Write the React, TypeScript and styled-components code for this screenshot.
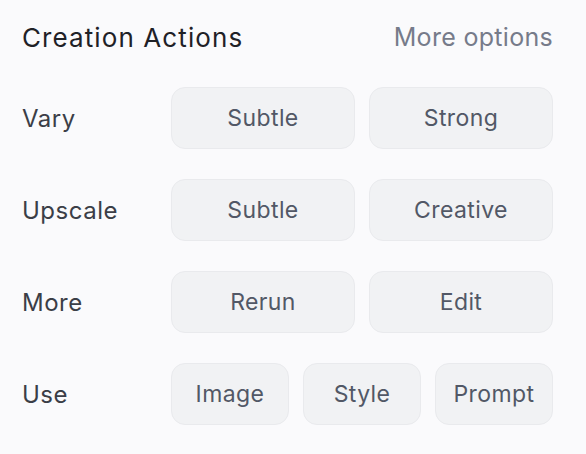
import React from "react";
import styled, { createGlobalStyle } from "styled-components";

const Global = createGlobalStyle`
  html, body { margin: 0; padding: 0; background: #fafafc; }
  body { font-family: Inter, "Noto Sans", sans-serif; }
`;

const Panel = styled.div`
  width: 586px;
  height: 454px;
  box-sizing: border-box;
  padding: 20px 33px 0 22px;
  background: #fafafc;
  display: flex;
  flex-direction: column;
`;

const Header = styled.div`
  display: flex;
  justify-content: space-between;
  align-items: center;
  height: 34px;
  margin-bottom: 33px;
`;

const Title = styled.div`
  font-size: 26px;
  font-weight: 400;
  color: #1f2127;
  letter-spacing: 1.1px;
`;

const MoreLink = styled.div`
  font-size: 25px;
  color: #767b8a;
  letter-spacing: 0.3px;
`;

const Rows = styled.div`
  display: flex;
  flex-direction: column;
  gap: 30px;
`;

const Row = styled.div`
  display: grid;
  grid-template-columns: 149px 1fr;
  align-items: center;
  height: 62px;
`;

const Label = styled.div`
  font-size: 24px;
  color: #3b3e47;
  letter-spacing: 0.5px;
`;

const Buttons = styled.div<{ $cols: number }>`
  display: grid;
  grid-template-columns: repeat(${(p) => p.$cols}, 1fr);
  gap: 14px;
  height: 100%;
`;

const Btn = styled.button`
  box-sizing: border-box;
  height: 62px;
  border-radius: 14px;
  border: 1px solid #e9eaed;
  background: #f1f2f4;
  color: #525866;
  font-family: Inter, "Noto Sans", sans-serif;
  font-size: 23px;
  letter-spacing: 0.4px;
  padding: 0;
  cursor: pointer;
`;

const rows: { label: string; items: string[] }[] = [
  { label: "Vary", items: ["Subtle", "Strong"] },
  { label: "Upscale", items: ["Subtle", "Creative"] },
  { label: "More", items: ["Rerun", "Edit"] },
  { label: "Use", items: ["Image", "Style", "Prompt"] },
];

export default function App() {
  return (
    <>
      <Global />
      <Panel>
        <Header>
          <Title>Creation Actions</Title>
          <MoreLink>More options</MoreLink>
        </Header>
        <Rows>
          {rows.map((r) => (
            <Row key={r.label}>
              <Label>{r.label}</Label>
              <Buttons $cols={r.items.length}>
                {r.items.map((i) => (
                  <Btn key={i}>{i}</Btn>
                ))}
              </Buttons>
            </Row>
          ))}
        </Rows>
      </Panel>
    </>
  );
}
